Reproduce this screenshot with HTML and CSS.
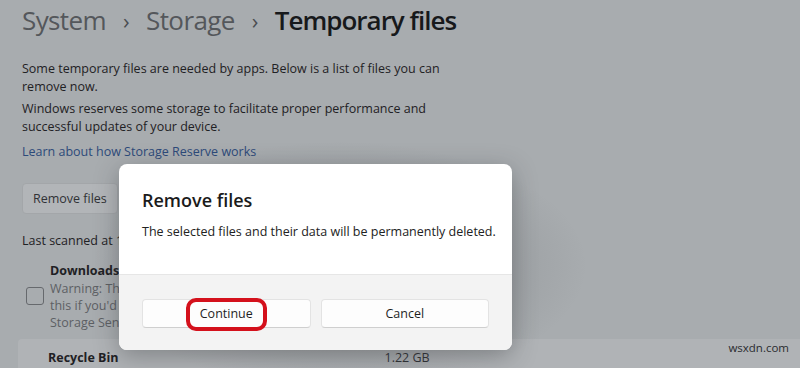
FILE: index.html
```html
<!DOCTYPE html>
<html lang="en">
<head>
    <meta charset="UTF-8">
    <title>Temporary files</title>
    <link rel="stylesheet" href="styles.css">
</head>
<body>
    <div class="page">
        <h1 class="breadcrumb">
            <span class="crumb">System</span>
            <span class="chev">&rsaquo;</span>
            <span class="crumb">Storage</span>
            <span class="chev">&rsaquo;</span>
            <span class="crumb current">Temporary files</span>
        </h1>
        <p class="desc">Some temporary files are needed by apps. Below is a list of files you can remove now.</p>
        <p class="desc">Windows reserves some storage to facilitate proper performance and successful updates of your device.</p>
        <a class="link" href="#">Learn about how Storage Reserve works</a>
        <div class="actions">
            <button class="btn-plain">Remove files</button>
        </div>
        <div class="scanned">Last scanned at 1</div>
        <div class="item">
            <span class="checkbox"></span>
            <div class="item-text">
                <div class="item-title">Downloads</div>
                <div class="item-sub">Warning: The<br>this if you'd<br>Storage Sens</div>
            </div>
        </div>
        <div class="row">
            <span class="item-title">Recycle Bin</span>
            <span class="size">1.22 GB</span>
        </div>
    </div>

    <div class="shade"></div>
    <div class="dialog">
        <div class="dialog-body">
            <h2>Remove files</h2>
            <p>The selected files and their data will be permanently deleted.</p>
        </div>
        <div class="dialog-footer">
            <button class="btn btn-marked">Continue</button>
            <button class="btn">Cancel</button>
        </div>
    </div>

    <div class="watermark">wsxdn.com</div>
</body>
</html>
```

FILE: styles.css
```css
:root {
    --bg: #a8acaf;
    --text: #1f2124;
    --muted: #505358;
    --red: #d4111c;
}
html, body {
    margin: 0;
    height: 100%;
}
body {
    font-family: 'Open Sans', 'Noto Sans', sans-serif;
    font-size: 12.5px;
    background-color: var(--bg);
    color: var(--text);
    width: 800px;
    height: 368px;
    overflow: hidden;
    position: relative;
}
.page {
    padding: 0 0 0 22px;
}
.breadcrumb {
    margin: 0;
    padding-top: 1px;
    font-size: 26px;
    font-weight: 400;
    height: 38px;
    line-height: 32px;
    display: flex;
    align-items: center;
    gap: 17px;
    letter-spacing: -0.6px;
}
.crumb {
    color: #54575b;
}
.crumb.current {
    color: #17191b;
    font-weight: 600;
    letter-spacing: -1px;
}
.chev {
    color: #4a4d51;
    font-size: 22px;
}
.desc {
    margin: 21px 0 0;
    line-height: 18px;
    width: 420px;
    color: var(--text);
}
.desc + .desc {
    margin-top: 4px;
}
.link {
    display: block;
    margin-top: 7px;
    line-height: 18px;
    color: #2d4a7a;
    text-decoration: none;
}
.actions {
    margin-top: 22px;
}
.btn-plain {
    font-family: inherit;
    font-size: 12.5px;
    color: #303236;
    background-color: #b2b5b8;
    border: 1px solid #a3a6a9;
    border-radius: 4px;
    height: 31px;
    padding: 0 10px;
}
.scanned {
    margin-top: 18px;
    line-height: 18px;
}
.item {
    display: flex;
    align-items: center;
    gap: 6px;
    margin-top: 11px;
    padding-left: 4px;
}
.checkbox {
    width: 16px;
    height: 16px;
    border: 1.5px solid #66696d;
    border-radius: 3px;
    flex-shrink: 0;
}
.item-title {
    font-weight: 700;
    line-height: 19px;
}
.item-sub {
    line-height: 17px;
    color: #5d6064;
    white-space: nowrap;
}
.row {
    margin: 8px 0 0 -4px;
    background-color: #b0b3b6;
    border-radius: 4px 0 0 0;
    height: 36px;
    display: flex;
    align-items: center;
    padding-left: 30px;
}
.size {
    margin-left: 266px;
    color: #303236;
}

/* modal */
.shade {
    position: absolute;
    left: 90px;
    top: 140px;
    width: 500px;
    height: 228px;
    background: radial-gradient(ellipse at 50% 55%, rgba(60, 62, 66, 0.3), rgba(60, 62, 66, 0) 70%);
}
.dialog {
    position: absolute;
    left: 119px;
    top: 164px;
    width: 393px;
    height: 186px;
    background-color: #fff;
    border-radius: 8px;
    overflow: hidden;
    box-shadow: 0 6px 24px rgba(40, 42, 46, 0.35);
    display: flex;
    flex-direction: column;
}
.dialog-body {
    height: 111px;
    padding: 0 23px;
    box-sizing: border-box;
    border-bottom: 1px solid #e6e6e6;
}
.dialog-body h2 {
    margin: 23px 0 0;
    font-size: 18px;
    font-weight: 600;
    line-height: 26px;
    color: #1b1b1b;
}
.dialog-body p {
    margin: 10px 0 0;
    line-height: 18px;
    color: #222;
    white-space: nowrap;
}
.dialog-footer {
    flex: 1;
    background-color: #f3f3f3;
    display: flex;
    gap: 10px;
    padding: 24px 23px 0;
}
.btn {
    position: relative;
    flex: 1;
    height: 29px;
    font-family: inherit;
    font-size: 12.5px;
    color: #1f1f1f;
    background-color: #fdfdfd;
    border: 1px solid #e3e3e3;
    border-bottom-color: #cfcfcf;
    border-radius: 4px;
}
.btn-marked::after {
    content: "";
    position: absolute;
    left: 43px;
    top: -2px;
    width: 73px;
    height: 25px;
    border: 4px solid var(--red);
    border-radius: 10px;
}
.watermark {
    position: absolute;
    right: 11px;
    bottom: 13px;
    font-size: 11.5px;
    color: #2a2c2f;
}
```
